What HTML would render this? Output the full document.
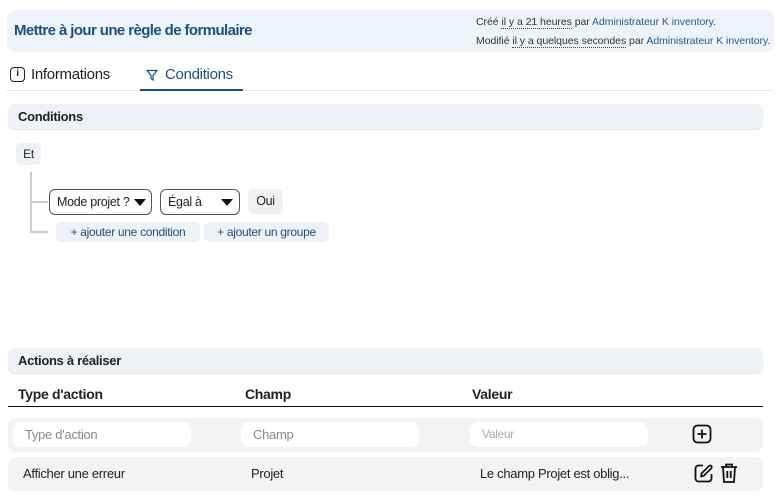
<!DOCTYPE html>
<html><head><meta charset="utf-8"><style>
*{box-sizing:border-box;margin:0;padding:0}
body{width:781px;height:504px;background:#fff;font-family:"Liberation Sans",sans-serif;color:#222;position:relative;overflow:hidden;letter-spacing:-0.3px}
.a{position:absolute}
.bar{position:absolute;left:8px;width:755px;height:25px;background:#eef2f7;border-radius:7px;font-weight:bold;font-size:13px;line-height:25px;padding-left:10px;box-shadow:0 1px 1px #dde3ea}
.lnk{color:#1f5a8f}
.dot{border-bottom:1px dotted #444}
.sel{position:absolute;top:189px;height:26px;border:1px solid #555;border-radius:6px;font-size:12.5px;line-height:24px;padding-left:7px;background:#fff}
.tri{position:absolute;right:5px;top:9px;width:0;height:0;border-left:6px solid transparent;border-right:6px solid transparent;border-top:7px solid #111}
.btn{position:absolute;top:222px;height:20px;background:#eef2f7;border-radius:6px;font-size:12px;line-height:20px;color:#1f4e7a;text-align:center}
.row{position:absolute;left:8px;width:755px;background:#f3f3f3;border-radius:8px}
.inp{position:absolute;top:4px;height:25px;width:178px;background:#fff;border-radius:8px;font-size:13px;line-height:25px;padding-left:12px;color:#888}
.th{position:absolute;top:386px;font-weight:bold;font-size:14px}
.td{position:absolute;top:466px;font-size:13px}
</style></head><body>
<div class="a" style="left:7px;top:10px;width:767px;height:42px;background:#eef3f9;border-radius:9px"></div>
<div class="a" style="left:14px;top:22px;font-size:15px;color:#1e4f7f;font-weight:bold;letter-spacing:-0.6px">Mettre à jour une règle de formulaire</div>
<div class="a" style="left:476px;top:13px;font-size:10.5px;line-height:19px;color:#333;letter-spacing:-0.05px">Créé <span class="dot">il y a 21 heures</span> par <span class="lnk">Administrateur K inventory</span>.<br>Modifié <span class="dot">il y a quelques secondes</span> par <span class="lnk">Administrateur K inventory</span>.</div>
<div class="a" style="left:10px;top:67px;width:15px;height:15px;border:1.5px solid #222;border-radius:4px;font-size:10px;line-height:12px;text-align:center;font-weight:bold">i</div>
<div class="a" style="left:31px;top:66px;font-size:15px">Informations</div>
<svg class="a" style="left:146px;top:69px" width="12" height="12" viewBox="0 0 12 12"><path d="M1 1.5H11L7 6.5V11L5 9.5V6.5Z" fill="none" stroke="#1f4e7a" stroke-width="1.2"/></svg>
<div class="a" style="left:165px;top:66px;font-size:15px;color:#1f4e7a">Conditions</div>
<div class="a" style="left:6px;top:90px;width:768px;height:1px;background:#e3e6ea"></div>
<div class="a" style="left:140px;top:89px;width:103px;height:2px;background:#1a4f80"></div>
<div class="bar" style="top:104px">Conditions</div>
<div class="a" style="left:16px;top:143px;width:25px;height:22px;background:#eef2f7;border-radius:5px;font-size:12px;line-height:22px;text-align:center">Et</div>
<div class="a" style="left:30px;top:172px;width:2px;height:61px;background:#c9ced4"></div>
<div class="a" style="left:30px;top:201px;width:18px;height:2px;background:#c9ced4"></div>
<div class="a" style="left:30px;top:231px;width:18px;height:2px;background:#c9ced4"></div>
<div class="sel" style="left:49px;width:103px">Mode projet ?<span class="tri"></span></div>
<div class="sel" style="left:160px;width:80px">Égal à<span class="tri" style="right:6px"></span></div>
<div class="a" style="left:248px;top:189px;width:35px;height:25px;background:#f0f0f0;border-radius:5px;font-size:12.5px;line-height:25px;text-align:center">Oui</div>
<div class="btn" style="left:56px;width:144px">+ ajouter une condition</div>
<div class="btn" style="left:204px;width:125px">+ ajouter un groupe</div>
<div class="bar" style="top:348px">Actions à réaliser</div>
<div class="th" style="left:18px">Type d'action</div>
<div class="th" style="left:245px">Champ</div>
<div class="th" style="left:472px">Valeur</div>
<div class="a" style="left:8px;top:406px;width:755px;height:1px;background:#111"></div>
<div class="row" style="top:418px;height:34px">
<div class="inp" style="left:5px">Type d'action</div>
<div class="inp" style="left:233px">Champ</div>
<div class="inp" style="left:462px;color:#aaa;font-size:12px">Valeur</div>
</div>
<svg class="a" style="left:692px;top:424px" width="20" height="20" viewBox="0 0 20 20"><rect x="1.5" y="1.5" width="17" height="17" rx="4" fill="none" stroke="#111" stroke-width="1.8"/><path d="M10 5.5V14.5M5.5 10H14.5" stroke="#111" stroke-width="1.8"/></svg>
<div class="row" style="top:457px;height:34px"></div>
<div class="td" style="left:23px">Afficher une erreur</div>
<div class="td" style="left:251px">Projet</div>
<div class="td" style="left:480px">Le champ Projet est oblig...</div>
<svg class="a" style="left:693px;top:463px" width="21" height="21" viewBox="0 0 21 21"><path d="M10 2.5H5.5A3 3 0 0 0 2.5 5.5V15.5A3 3 0 0 0 5.5 18.5H15.5A3 3 0 0 0 18.5 15.5V11" fill="none" stroke="#111" stroke-width="1.8"/><path d="M8 13.5L8.5 10.5L16 3A1.6 1.6 0 0 1 18.3 5.3L10.8 12.8Z" fill="none" stroke="#111" stroke-width="1.7" stroke-linejoin="round"/></svg>
<svg class="a" style="left:719px;top:462px" width="20" height="22" viewBox="0 0 20 22"><path d="M2 5H18M7 5V2.5H13V5M4 5L5 20H15L16 5M8.3 9V16M11.7 9V16" fill="none" stroke="#111" stroke-width="1.8"/></svg>
</body></html>
